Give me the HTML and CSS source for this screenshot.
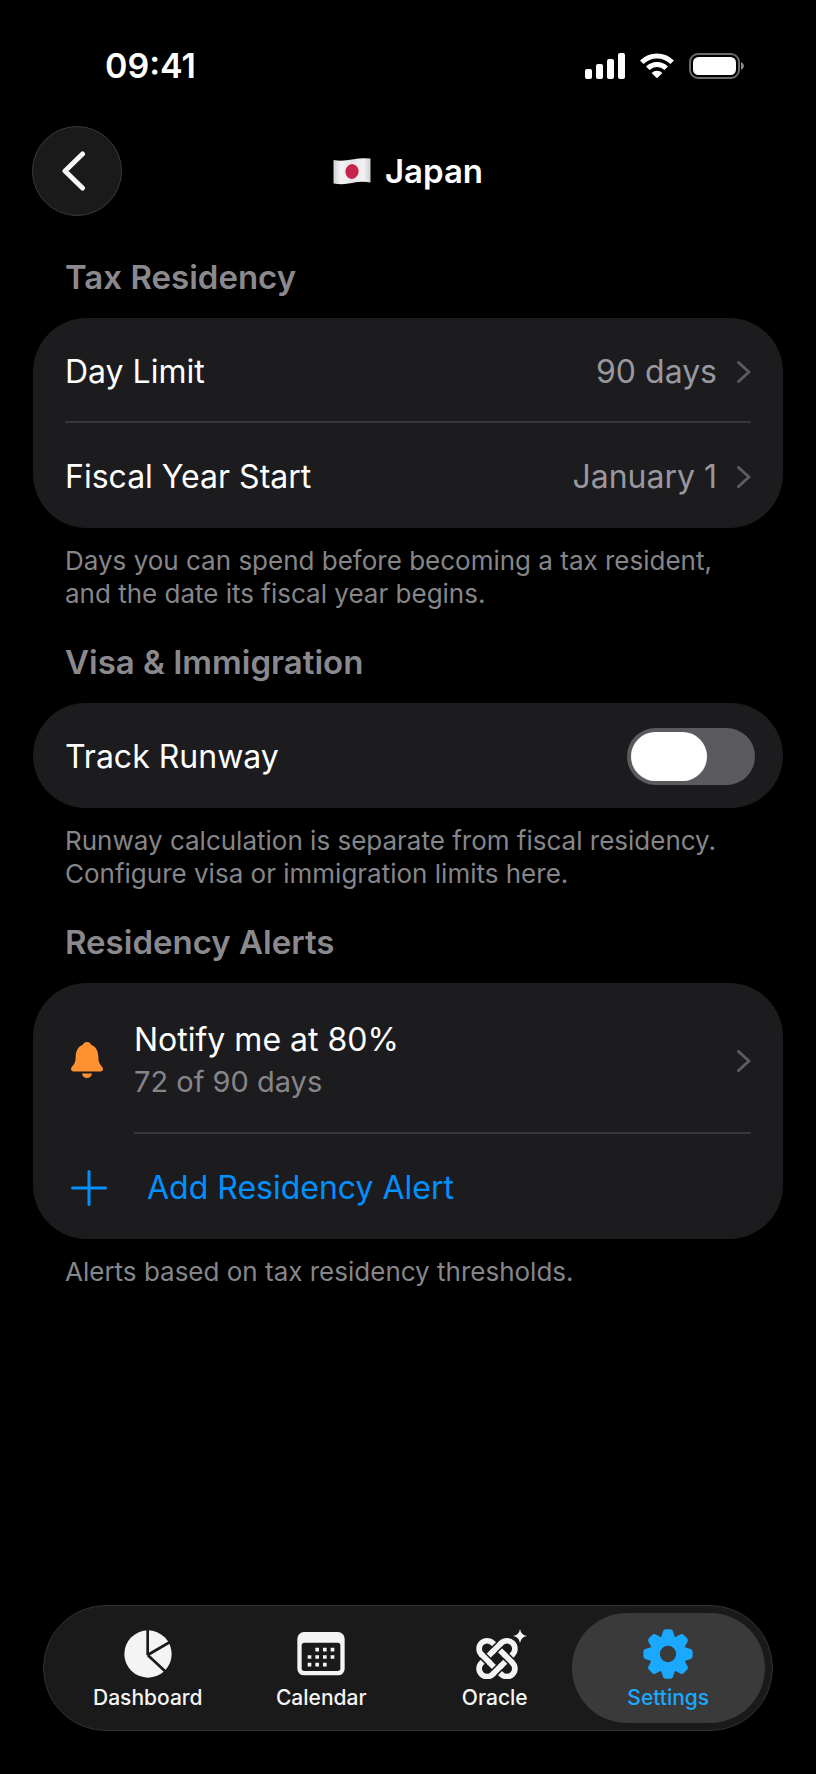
FILE: index.html
```html
<!DOCTYPE html>
<html lang="en">
<head>
<meta charset="utf-8">
<meta name="viewport" content="width=device-width, initial-scale=1">
<title>Japan</title>
<link rel="stylesheet" href="styles.css">
</head>
<body>
<div class="screen">
  <div class="status">
    <span class="time">09:41</span>
    <div class="status-icons">
      <svg width="40" height="26" viewBox="0 0 40 26" fill="#fff" aria-hidden="true">
        <rect x="0" y="16" width="7" height="10" rx="2"/><rect x="11" y="11" width="7" height="15" rx="2"/>
        <rect x="22" y="6" width="7" height="20" rx="2"/><rect x="33" y="0" width="7" height="26" rx="2"/>
      </svg>
      <svg width="34" height="26" viewBox="0 0 34 26" aria-hidden="true">
        <g fill="none" stroke="#fff" stroke-width="5">
          <path d="M1.8 9.2A21.5 21.5 0 0 1 32.2 9.2"/>
          <path d="M7.8 15.2A13 13 0 0 1 26.2 15.2"/>
        </g>
        <path fill="#fff" d="M11.6 20A7.6 7.6 0 0 1 22.4 20L17.6 24.8Q17 25.4 16.4 24.8Z"/>
      </svg>
      <svg width="56" height="26" viewBox="0 0 56 26" aria-hidden="true">
        <rect x="1" y="1" width="49" height="24" rx="8" fill="none" stroke="#6a6a6a" stroke-width="2"/>
        <rect x="4" y="4" width="43" height="18" rx="5.5" fill="#fff"/>
        <path d="M52 9Q55 10.500 55 13T52 17Z" fill="#8a8a8a"/>
      </svg>
    </div>
  </div>

  <header class="header">
    <button class="back" type="button" aria-label="Back">
      <svg width="24" height="40" viewBox="0 0 24 40" fill="none" stroke="#f6f6f6" stroke-width="5" stroke-linecap="round" stroke-linejoin="round" aria-hidden="true"><path d="M20.500 3L3 20L20.500 37"/></svg>
    </button>
    <h1 class="title">
      <svg width="38" height="28" viewBox="0 0 38 28" aria-hidden="true">
        <defs><linearGradient id="cloth"><stop offset="0" stop-color="#cfcfd2"/><stop offset=".2" stop-color="#f4f4f5"/><stop offset=".5" stop-color="#e4e4e6"/><stop offset=".8" stop-color="#f2f2f3"/><stop offset="1" stop-color="#d0d0d3"/></linearGradient></defs>
        <path d="M.5 3Q9 4.500 19 2.500T37.500 1.500V25.500Q28 24 19 26T.5 26.500Z" fill="url(#cloth)"/>
        <ellipse cx="19" cy="14.500" rx="6.600" ry="7.400" fill="#c8234b" transform="rotate(8 19 14.500)"/>
      </svg>
      <span>Japan</span>
    </h1>
  </header>

  <main class="content">
    <section class="group">
      <h2 class="heading">Tax Residency</h2>
      <div class="card">
        <button class="row" type="button">
          <span class="label">Day Limit</span><span class="value">90 days</span>
          <svg class="chevron" viewBox="0 0 14 22" aria-hidden="true"><path d="M1.500 1.500L12 11L1.500 20.500"/></svg>
        </button>
        <button class="row divided" type="button">
          <span class="label">Fiscal Year Start</span><span class="value">January 1</span>
          <svg class="chevron" viewBox="0 0 14 22" aria-hidden="true"><path d="M1.500 1.500L12 11L1.500 20.500"/></svg>
        </button>
      </div>
      <p class="note">Days you can spend before becoming a tax resident, and the date its fiscal year begins.</p>
    </section>

    <section class="group">
      <h2 class="heading">Visa &amp; Immigration</h2>
      <div class="card">
        <div class="row">
          <label class="label" for="runway">Track Runway</label>
          <input class="switch" type="checkbox" role="switch" id="runway">
        </div>
      </div>
      <p class="note">Runway calculation is separate from fiscal residency. Configure visa or immigration limits here.</p>
    </section>

    <section class="group">
      <h2 class="heading">Residency Alerts</h2>
      <div class="card">
        <button class="row alert" type="button">
          <svg width="32" height="37" viewBox="0 0 32 37" fill="#ff9230" aria-hidden="true">
            <path d="M16 0C18.300 0 19.900 1.400 20.500 3.100C25.300 5 27.100 9.300 27.300 14.500C27.500 20 28.400 21.700 30.600 24.200C31.600 25.400 32 26.200 32 27.100C32 28.600 30.900 29.500 29.400 29.500H2.600C1.100 29.500 0 28.600 0 27.100C0 26.200.4 25.400 1.400 24.200C3.600 21.700 4.500 20 4.700 14.500C4.900 9.300 6.700 5 11.500 3.100C12.100 1.400 13.700 0 16 0Z"/>
            <path d="M11 31.500H21C20.700 34 18.700 36 16 36S11.300 34 11 31.500Z"/>
          </svg>
          <span class="label stack"><span>Notify me at 80%</span><span class="sub">72 of 90 days</span></span>
          <svg class="chevron" viewBox="0 0 14 22" aria-hidden="true"><path d="M1.500 1.500L12 11L1.500 20.500"/></svg>
        </button>
        <button class="row divided indented add" type="button">
          <svg width="36" height="36" viewBox="0 0 36 36" fill="none" stroke="#0091ff" stroke-width="3" stroke-linecap="round" aria-hidden="true"><path d="M18 1.500V34.500M1.500 18H34.500"/></svg>
          <span class="label">Add Residency Alert</span>
        </button>
      </div>
      <p class="note">Alerts based on tax residency thresholds.</p>
    </section>
  </main>

  <nav class="tabs" aria-label="Main">
    <a class="tab" href="#dashboard">
      <svg width="50" height="50" viewBox="-75 -75 150 150" aria-hidden="true">
        <circle r="71" fill="#f4f4f4"/>
        <path d="M-1 -74V3M-1 3L66 -36M-1 3L53 53" fill="none" stroke="#1a1a1a" stroke-width="8"/>
      </svg>
      <span>Dashboard</span>
    </a>
    <a class="tab" href="#calendar">
      <svg width="50" height="50" viewBox="-75 -75 150 150" aria-hidden="true">
        <rect x="-71" y="-66" width="142" height="130" rx="20" fill="#f4f4f4"/>
        <rect x="-58" y="-34" width="116" height="85" rx="8" fill="#1a1a1a"/>
        <g stroke="#f4f4f4" stroke-width="11" stroke-dasharray="11 12" fill="none">
          <path d="M-17 -13H40M-40 9H40M-40 32H17"/>
        </g>
      </svg>
      <span>Calendar</span>
    </a>
    <a class="tab" href="#oracle">
      <svg width="66" height="50" viewBox="-99 -90 198 150" aria-hidden="true">
        <g transform="translate(6 -1)" fill="none">
          <g stroke="#f4f4f4" stroke-width="17">
            <rect x="-66" y="-24" width="132" height="48" rx="24" transform="rotate(45)"/>
            <rect x="-66" y="-24" width="132" height="48" rx="24" transform="rotate(-45)"/>
          </g>
          <path d="M10 -44L-10 -24M24 -10L44 10M-44 -10L-24 10M-10 44L10 24" stroke="#1a1a1a" stroke-width="26"/>
          <path d="M13 -47L-14 -20M20 -14L47 13M-47 -13L-20 14M-13 47L14 20" stroke="#f4f4f4" stroke-width="17"/>
        </g>
        <path d="M75 -90Q78 -72 96 -69Q78 -66 75 -48Q72 -66 54 -69Q72 -72 75 -90Z" fill="#f4f4f4"/>
      </svg>
      <span>Oracle</span>
    </a>
    <a class="tab active" href="#settings" aria-current="page">
      <svg width="50" height="50" viewBox="-75 -75 150 150" aria-hidden="true">
        <defs><path id="tooth" d="M-25 -46Q-20 -50 -18 -58L-16 -66Q-14 -74 -7 -74H7Q14 -74 16 -66L18 -58Q20 -50 25 -46Z"/></defs>
        <g fill="#1aa9ff">
          <use href="#tooth"/><use href="#tooth" transform="rotate(45)"/><use href="#tooth" transform="rotate(90)"/><use href="#tooth" transform="rotate(135)"/>
          <use href="#tooth" transform="rotate(180)"/><use href="#tooth" transform="rotate(225)"/><use href="#tooth" transform="rotate(270)"/><use href="#tooth" transform="rotate(315)"/>
        </g>
        <circle r="39" fill="none" stroke="#1aa9ff" stroke-width="29"/>
      </svg>
      <span>Settings</span>
    </a>
  </nav>
</div>
</body>
</html>
```
FILE: styles.css
```css
* {
  box-sizing: border-box;
  margin: 0;
}

body {
  background: #000;
  color: #fff;
  font-family: Inter, "Liberation Sans", sans-serif;
  font-size: 32px;
  line-height: 40px;
}

svg {
  display: block;
  flex: none;
}

button {
  font: inherit;
  color: inherit;
  border: 0;
  background: none;
  text-align: left;
  cursor: pointer;
}

a {
  color: inherit;
  text-decoration: none;
}

.screen {
  min-height: 100vh;
  display: flex;
  flex-direction: column;
}

.status {
  display: flex;
  align-items: center;
  justify-content: space-between;
  padding: 46px 71px 0 105px;
}

.time {
  font-size: 34px;
  font-weight: 600;
}

.status-icons {
  display: flex;
  gap: 15px;
}

.header {
  display: grid;
  grid-template-columns: 1fr auto 1fr;
  align-items: center;
  padding: 40px 32px 0;
}

.back {
  width: 90px;
  height: 90px;
  padding: 0 6px 0 0;
  border: 1px solid #3a3a3a;
  border-radius: 50%;
  background: #1a1a1a;
  display: flex;
  align-items: center;
  justify-content: center;
}

.title {
  display: flex;
  align-items: center;
  gap: 14px;
  font-size: 33px;
  font-weight: 600;
}

.content {
  padding: 41px 33px 0;
  display: flex;
  flex-direction: column;
  gap: 32px;
}

.heading {
  padding: 0 32px 21px;
  color: #8a8a8e;
  font-size: 33px;
  font-weight: 600;
}

.card {
  background: #1c1c1e;
  border-radius: 54px;
}

.row {
  position: relative;
  width: 100%;
  min-height: 105px;
  padding: 2px 32px 0;
  display: flex;
  align-items: center;
}

.divided::before {
  content: "";
  position: absolute;
  top: -2px;
  left: 32px;
  right: 32px;
  height: 2px;
  background: #38383a;
}

.indented::before {
  left: 101px;
}

.label {
  flex: 1;
}

.value {
  color: #98989e;
}

.chevron {
  width: 14px;
  height: 22px;
  margin-left: 20px;
  fill: none;
  stroke: #5c5c60;
  stroke-width: 3;
  stroke-linecap: round;
  stroke-linejoin: round;
}

.note {
  padding: 16px 32px 0;
  color: #86868a;
  font-size: 26px;
  line-height: 33px;
}

.switch {
  appearance: none;
  width: 128px;
  height: 57px;
  margin: 0 -4px 0 0;
  padding: 4px;
  border-radius: 29px;
  background: #5b5b5f;
  display: flex;
}

.switch::before {
  content: "";
  width: 76px;
  border-radius: 25px;
  background: #fff;
}

.switch:checked {
  background: #30d158;
  justify-content: flex-end;
}

.alert {
  min-height: 151px;
  padding-top: 4px;
  padding-left: 38px;
  gap: 31px;
}

.stack {
  display: flex;
  flex-direction: column;
  line-height: 42px;
}

.sub {
  color: #86868a;
  font-size: 29px;
}

.add {
  padding-left: 38px;
  gap: 40px;
  color: #0091ff;
}

.tabs {
  margin: auto 43px 43px;
  padding: 7px 17px;
  border: 1px solid #323232;
  border-radius: 63px;
  background: #1a1a1a;
  display: flex;
}

.tab {
  position: relative;
  flex: 1;
  height: 110px;
  padding-top: 16px;
  display: flex;
  flex-direction: column;
  align-items: center;
  gap: 6px;
  color: #f4f4f4;
  font-size: 21px;
  font-weight: 500;
  line-height: 26px;
}

.tab > * {
  position: relative;
}

.active {
  color: #1aa9ff;
}

.active::before {
  content: "";
  position: absolute;
  inset: 0 -10px;
  border-radius: 55px;
  background: #3a3a3a;
}
```
